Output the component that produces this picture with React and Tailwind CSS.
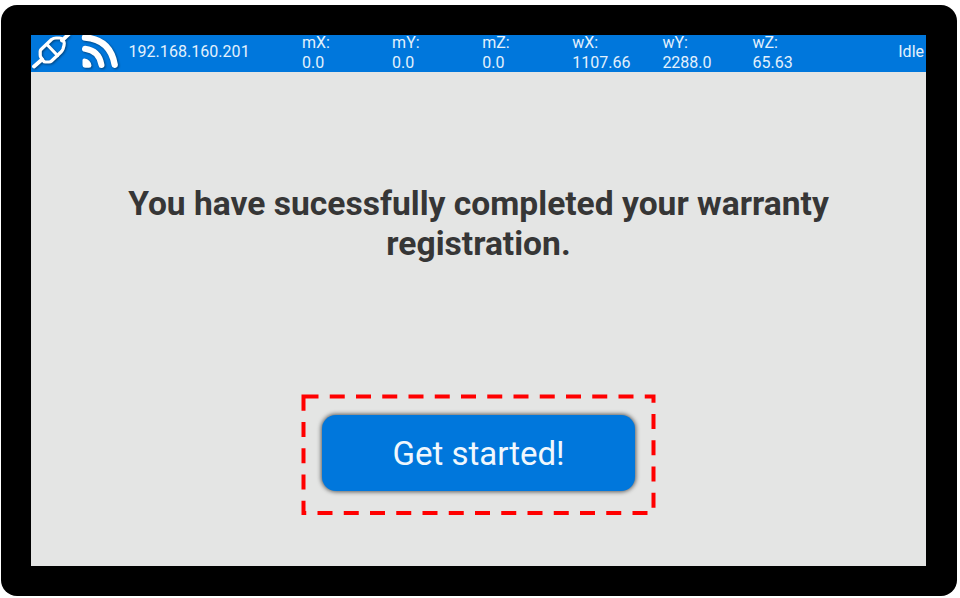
import React from "react";

const positions = [
  { label: "mX:", value: "0.0" },
  { label: "mY:", value: "0.0" },
  { label: "mZ:", value: "0.0" },
  { label: "wX:", value: "1107.66" },
  { label: "wY:", value: "2288.0" },
  { label: "wZ:", value: "65.63" },
];

const PlugIcon = () => (
  <svg viewBox="0 0 45 37" className="w-[45px] h-[37px] shrink-0 drop-shadow-[1px_1px_1px_rgba(0,0,0,0.45)]" fill="none" stroke="#fff" strokeLinecap="round" strokeLinejoin="round">
    <path d="M3 31.5L11 24.5M31 5.5L39 -2" strokeWidth="3.8" />
    <path d="M10 14.5L20.5 4.5Q22.5 3 25 3H28.5Q30.5 3 31.5 4.5L33 7Q33.5 8 33 10.5L32 14Q31.5 15.5 30 17L20.5 26Q19.5 27 18 27H14.5Q13 27 12 25.5L10 22.5Q9.2 21.5 9.2 20V16.5Q9.2 15.3 10 14.5Z" strokeWidth="3.2" />
    <path d="M16 9.5L26.5 20.5" strokeWidth="3.2" />
  </svg>
);

const WifiIcon = () => (
  <svg viewBox="0 0 45 37" className="w-[45px] h-[37px] shrink-0 drop-shadow-[1px_1px_1px_rgba(0,0,0,0.45)]" fill="none" stroke="#fff" strokeLinecap="round">
    <path d="M8.5 23.5Q14.5 24.5 15.5 30.5Q15.5 32.8 13 32.8H9.5Q6.5 32.8 6.5 29.5V25.5Q6.5 23.2 8.5 23.5Z" fill="#fff" stroke="none" />
    <path d="M9 13.8Q23 15.5 25.5 30" strokeWidth="6" />
    <path d="M9 2.5Q34.5 4.5 38.7 29.8" strokeWidth="6.4" />
  </svg>
);

const App = () => {
  return (
    <div className="w-[960px] h-[598px] bg-white pl-px pt-[4.5px] font-['Roboto',sans-serif]">
      <div className="w-[955.5px] h-[591px] bg-black rounded-[16px] pl-[30px] pt-[30px]">
        <div className="w-[895px] h-[531px] bg-[#e4e5e4] flex flex-col items-center">
          {/* STATUS BAR */}
          <div className="w-full h-[37.5px] shrink-0 bg-[#0077dc] flex items-center text-[16px] text-[#e3f1fc]">
            <PlugIcon />
            <WifiIcon />
            <div className="w-[181px] pl-[7.5px] pb-[2px] leading-5 tracking-[0.04px]">192.168.160.201</div>
            <div className="flex pb-[1.5px]">
              {positions.map((item) => (
                <div key={item.label} className="w-[90.1px] flex flex-col gap-1 leading-4">
                  <div>{item.label}</div>
                  <div>{item.value}</div>
                </div>
              ))}
            </div>
            <div className="ml-auto pr-0.5 pb-[2px] leading-5">Idle</div>
          </div>

          {/* MESSAGE */}
          <h1 className="mt-[112px] w-[740px] text-center text-[33.6px] leading-10 font-bold text-[#363636]">
            You have sucessfully completed your warranty registration.
          </h1>

          {/* ACTION */}
          <div className="relative mt-[151px]">
            <button className="block w-[313px] h-[76px] pt-[2px] rounded-[14px] bg-[#0077dc] text-[#f0f7fd] text-[33px] shadow-[0_0_4px_1px_rgba(0,0,0,0.6)]">
              Get started!
            </button>
            <svg className="absolute -left-[21px] -top-[21px] w-[356px] h-[122px]" fill="none">
              <path d="M2.5 2.5H352.5V119H2.5Z" stroke="#ff0000" strokeWidth="4" strokeDasharray="15 11.25" />
            </svg>
          </div>
        </div>
      </div>
    </div>
  );
};

export default App;
